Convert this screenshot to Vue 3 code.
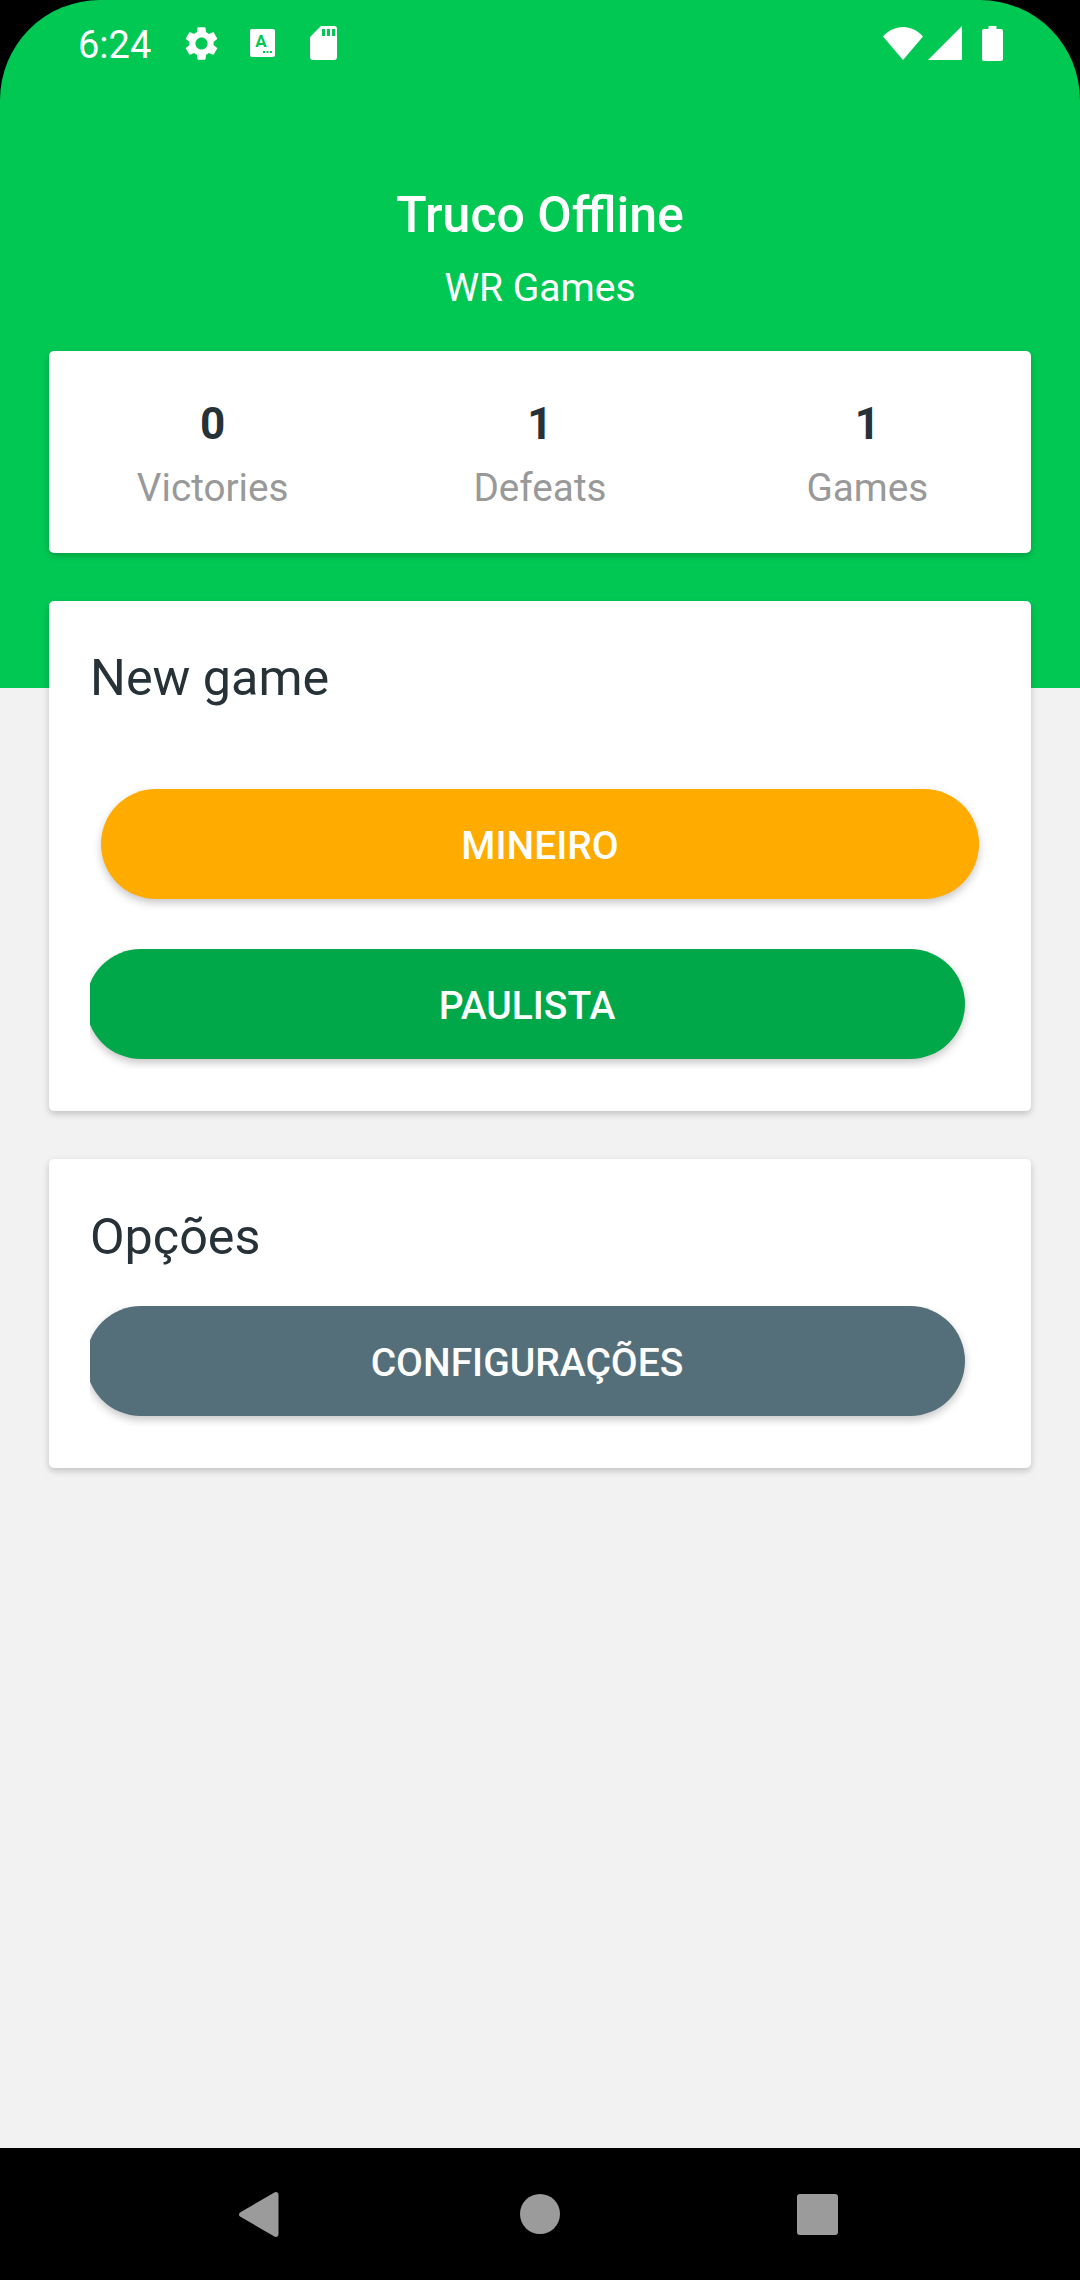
<template>
  <div class="screen">
    <div class="app">
      <div class="status-bar">
        <div class="status-left">
          <span class="time">6:24</span>
          <svg class="ic-gear" viewBox="2.4 1.6 19.2 20.8">
            <path fill="#fff" d="M19.14 12.94c.04-.3.06-.61.06-.94 0-.32-.02-.64-.07-.94l2.03-1.58c.18-.14.23-.41.12-.61l-1.92-3.32c-.12-.22-.37-.29-.59-.22l-2.39.96c-.5-.38-1.03-.7-1.62-.94l-.36-2.54c-.04-.24-.24-.41-.48-.41h-3.84c-.24 0-.43.17-.47.41l-.36 2.54c-.59.24-1.13.57-1.62.94l-2.39-.96c-.22-.08-.47 0-.59.22L2.74 8.87c-.12.21-.08.47.12.61l2.03 1.58c-.05.3-.09.63-.09.94s.02.64.07.94l-2.03 1.58c-.18.14-.23.41-.12.61l1.92 3.32c.12.22.37.29.59.22l2.39-.96c.5.38 1.03.7 1.62.94l.36 2.54c.05.24.24.41.48.41h3.84c.24 0 .44-.17.47-.41l.36-2.54c.59-.24 1.13-.56 1.62-.94l2.39.96c.22.08.47 0 .59-.22l1.92-3.32c.12-.22.07-.47-.12-.61l-2.01-1.58zM12 15.6c-1.98 0-3.6-1.62-3.6-3.6s1.62-3.6 3.6-3.6 3.6 1.62 3.6 3.6-1.62 3.6-3.6 3.6z"/>
          </svg>
          <svg class="ic-a" viewBox="0 0 25 28">
            <rect width="25" height="28" rx="2" fill="#fff"/>
            <text x="11" y="18" class="ic-a-letter">A</text>
            <rect x="13" y="22" width="2" height="2" fill="#00c853"/>
            <rect x="16.5" y="22" width="2" height="2" fill="#00c853"/>
            <rect x="20" y="22" width="2" height="2" fill="#00c853"/>
          </svg>
          <svg class="ic-sd" viewBox="0 0 27 34">
            <path fill="#fff" d="M11 0h13a3 3 0 0 1 3 3v28a3 3 0 0 1-3 3H3a3 3 0 0 1-3-3V11z"/>
            <path fill="#00c853" d="M12 3h3v7h-3zM17 3h3v7h-3zM22 3h3v7h-3z"/>
          </svg>
        </div>
        <div class="status-right">
          <svg class="ic-wifi" viewBox="0 0 40 33">
            <path fill="#fff" d="M0 9.500C5.500 3.500 12.500 0 20 0s14.500 3.500 20 9.500L20 33z"/>
          </svg>
          <svg class="ic-signal" viewBox="0 0 34 34">
            <path fill="#fff" d="M34 0v34H0z"/>
          </svg>
          <svg class="ic-battery" viewBox="0 0 21 35">
            <path fill="#fff" d="M6.500 0h8v3H19a2 2 0 0 1 2 2v28a2 2 0 0 1-2 2H2a2 2 0 0 1-2-2V5a2 2 0 0 1 2-2h4.500z"/>
          </svg>
        </div>
      </div>

      <div class="heading">
        <h1>Truco Offline</h1>
        <p>WR Games</p>
      </div>

      <div class="card stats">
        <div class="stat" v-for="item in stats" :key="item.label">
          <span class="stat-num">{{ item.value }}</span>
          <span class="stat-label">{{ item.label }}</span>
        </div>
      </div>

      <div class="card game">
        <h2>New game</h2>
        <button class="btn btn-orange">MINEIRO</button>
        <div class="btn-clip paulista">
          <button class="btn btn-shifted btn-green">PAULISTA</button>
        </div>
      </div>

      <div class="card options">
        <h2>Opções</h2>
        <div class="btn-clip config">
          <button class="btn btn-shifted btn-slate">CONFIGURAÇÕES</button>
        </div>
      </div>
    </div>

    <div class="nav-bar">
      <svg class="nav-back" viewBox="0 0 40 45">
        <path fill="#9b9b9b" d="M1 24.500a2.500 2.500 0 0 1 0-4L35 .7c2-1.300 4.500-.4 4.500 2v39.600c0 2.400-2.500 3.300-4.500 2z"/>
      </svg>
      <span class="nav-home"></span>
      <span class="nav-recent"></span>
    </div>
  </div>
</template>

<script setup>
const stats = [
  { value: 0, label: 'Victories' },
  { value: 1, label: 'Defeats' },
  { value: 1, label: 'Games' }
]
</script>

<style>
html, body {
  margin: 0;
  background: #000;
}
</style>

<style scoped>
.screen {
  width: 1080px;
  height: 2280px;
  display: flex;
  flex-direction: column;
  background: #000;
  font-family: Roboto, "Liberation Sans", sans-serif;
  overflow: hidden;
}

.app {
  flex: 1;
  border-radius: 100px 100px 0 0;
  background: linear-gradient(#00c853 688px, #f2f2f2 688px);
}

/* status bar */
.status-bar {
  height: 88px;
  padding: 25px 77px 0 78px;
  box-sizing: border-box;
  display: flex;
  justify-content: space-between;
  align-items: flex-start;
}

.status-left, .status-right {
  display: flex;
  align-items: center;
  height: 36px;
}

.time {
  color: #fff;
  font-size: 38px;
  line-height: 38px;
  width: 107px;
  padding-top: 3px;
}

.ic-gear {
  width: 33px;
  height: 35px;
  margin-right: 32px;
}

.ic-a {
  width: 25px;
  height: 28px;
  margin-right: 35px;
}

.ic-a-letter {
  font-size: 17px;
  font-weight: 700;
  fill: #00c853;
  text-anchor: middle;
  font-family: Roboto, sans-serif;
}

.ic-sd {
  width: 27px;
  height: 34px;
}

.ic-wifi {
  width: 40px;
  height: 33px;
  margin-right: 5px;
}

.ic-signal {
  width: 34px;
  height: 34px;
  margin-right: 20px;
}

.ic-battery {
  width: 21px;
  height: 35px;
}

/* titulo */
.heading {
  padding-top: 97px;
  text-align: center;
  color: #fff;
}

.heading h1 {
  margin: 0;
  font-size: 50px;
  line-height: 60px;
  font-weight: 500;
}

.heading p {
  margin: 21px 0 41px;
  font-size: 39px;
  line-height: 44px;
}

.card {
  margin: 0 49px 48px;
  background: #fff;
  border-radius: 5px;
  box-shadow: 0 3px 7px rgba(0, 0, 0, .2);
}

h2 {
  margin: 0;
  font-size: 50.3px;
  line-height: 60px;
  font-weight: 400;
  color: #263238;
}

/* estatisticas */
.stats {
  display: grid;
  grid-template-columns: repeat(3, 1fr);
  padding: 48px 0 42px;
}

.stat {
  display: flex;
  flex-direction: column;
  align-items: center;
  gap: 16px;
}

.stat-num {
  font-size: 44px;
  line-height: 50px;
  font-weight: 700;
  color: #263238;
}

.stat-label {
  font-size: 38.7px;
  line-height: 46px;
  color: #999;
}

/* botoes */
.game {
  padding: 47px 0 52px 41px;
}

.options {
  padding: 48px 0 52px 41px;
}

.btn {
  display: block;
  height: 110px;
  border: 0;
  padding: 3px 0 0;
  border-radius: 55px;
  color: #fff;
  font-family: inherit;
  font-size: 39px;
  font-weight: 500;
  box-shadow: 0 4px 8px rgba(0, 0, 0, .22);
}

.btn-orange {
  width: 878px;
  margin: 81px 0 0 11px;
  background: #ffab00;
}

.btn-clip {
  width: 888px;
  height: 120px;
  overflow: hidden;
}

.paulista {
  margin-top: 50px;
  margin-bottom: -10px;
}

.config {
  margin-top: 39px;
  margin-bottom: -10px;
}

.btn-shifted {
  width: 879px;
  margin-left: -4px;
  padding-left: 3px;
}

.btn-green {
  background: #00a84a;
}

.btn-slate {
  background: #546e7a;
}

/* navegacao */
.nav-bar {
  height: 132px;
  flex-shrink: 0;
  background: #000;
  display: grid;
  grid-template-columns: 278px 282px 278px;
  align-items: center;
}

.nav-back {
  width: 40px;
  height: 45px;
  margin-left: 239px;
}

.nav-home {
  width: 40px;
  height: 40px;
  border-radius: 50%;
  background: #9b9b9b;
  margin-left: 242px;
}

.nav-recent {
  width: 41px;
  height: 41px;
  border-radius: 3px;
  background: #9b9b9b;
  margin-left: 237px;
}
</style>
